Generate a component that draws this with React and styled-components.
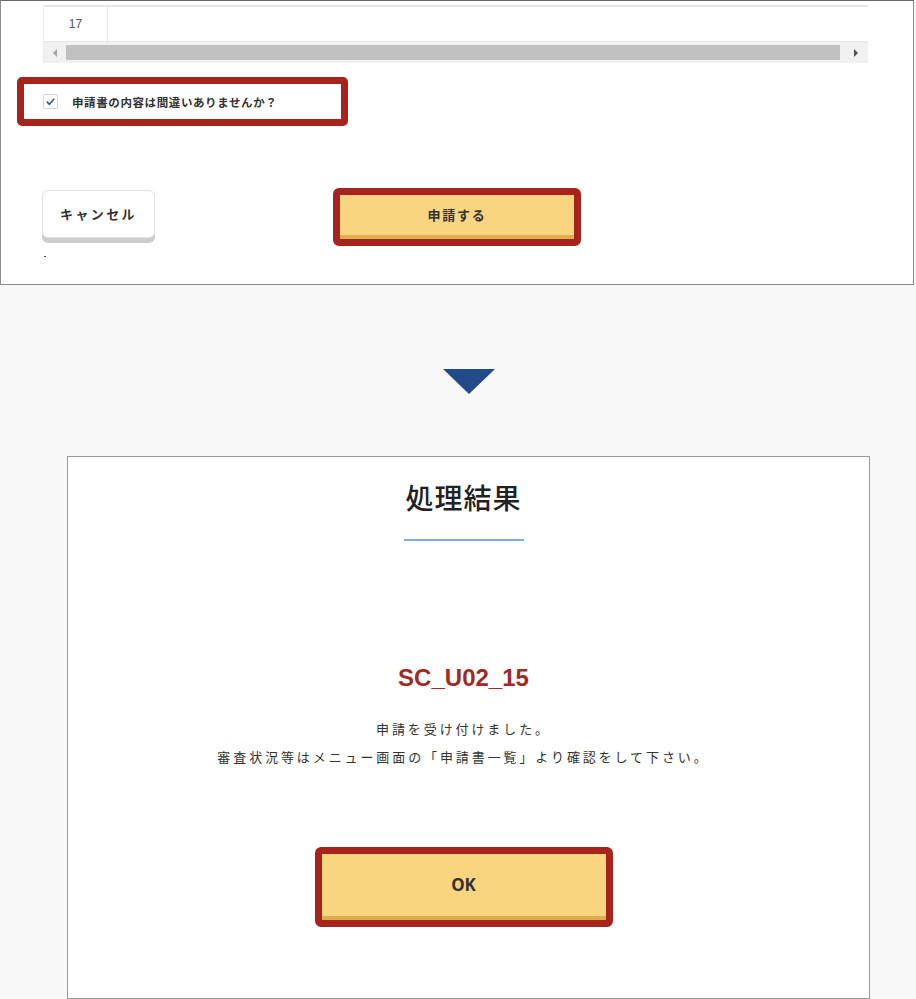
import styled, { createGlobalStyle } from 'styled-components';

const GlobalStyle = createGlobalStyle`
    html, body {
        margin: 0;
        padding: 0;
        background: #f8f8f8;
        font-family: "Noto Sans CJK JP", "Noto Sans", sans-serif;
    }
    * { box-sizing: border-box; }
`

const FormPanel = styled.section`
    width: 914px;
    height: 285px;
    background: #fff;
    border: 1px solid #8c8c8c;
    border-top-color: #666;
`

const Table = styled.div`
    margin: 4px 0 0 42px;
    width: 825px;
    border-top: 2px solid #e6e6e6;
    border-left: 1px solid #ececec;
`

const Row = styled.div`
    display: flex;
    height: 35px;
    border-bottom: 1px solid #e6e6e6;
`

const NumCell = styled.div`
    width: 64px;
    display: flex;
    align-items: center;
    justify-content: center;
    border-right: 1px solid #e6e6e6;
    font-family: "Liberation Sans", sans-serif;
    font-size: 12px;
    color: #555;
`

const Scrollbar = styled.div`
    display: flex;
    align-items: center;
    height: 21px;
    background: #f1f1f1;
    padding: 0 4px;
    gap: 4px;
`

const Thumb = styled.div`
    flex: 1;
    height: 15px;
    background: #c1c1c1;
`

const Arrow = styled.span`
    width: 0;
    height: 0;
    border-top: 4px solid transparent;
    border-bottom: 4px solid transparent;
    ${p => p.$dir === 'left'
        ? 'border-right: 4px solid #a3a3a3; margin: 0 5px;'
        : 'border-left: 4px solid #505050; margin: 0 6px 0 10px;'}
`

const ConfirmBox = styled.label`
    display: flex;
    align-items: center;
    gap: 14px;
    margin: 14px 0 0 16px;
    width: 331px;
    height: 49px;
    padding-left: 19px;
    border: 7px solid #a6241d;
    border-radius: 5px;
    font-size: 11.5px;
    font-weight: 700;
    letter-spacing: 0.6px;
    color: #333;
`

const Check = styled.span`
    width: 15px;
    height: 15px;
    border: 1px solid #d4d4d4;
    border-radius: 2px;
    display: flex;
    align-items: center;
    justify-content: center;
    svg { width: 11px; height: 11px; }
`

const ButtonRow = styled.div`
    display: flex;
    align-items: flex-start;
    margin: 62px 0 0 41px;
`

const CancelButton = styled.button`
    margin-top: 2px;
    width: 113px;
    height: 48px;
    padding: 0 0 2px;
    background: #fff;
    border: 1px solid #e4e4e4;
    border-radius: 6px;
    box-shadow: 0 5px 0 #cdcdcd;
    font-family: inherit;
    font-size: 13px;
    font-weight: 700;
    letter-spacing: 2.4px;
    color: #333;
`

const PrimaryButton = styled.button`
    width: ${p => p.$w}px;
    height: ${p => p.$h}px;
    margin-left: ${p => p.$ml || 0}px;
    margin-top: ${p => p.$mt || 0}px;
    border: 7px solid #a6241d;
    border-radius: 6px;
    background: #f8d57e;
    box-shadow: inset 0 -4px 0 #ddb04e;
    font-family: ${p => p.$latin ? '"Noto Sans", sans-serif' : 'inherit'};
    font-size: ${p => p.$fs}px;
    font-weight: 700;
    letter-spacing: ${p => p.$ls || 0}px;
    color: #333;
    padding: 0 0 6px;
`

const Dash = styled.div`
    margin: 10px 0 0 43px;
    width: 2px;
    height: 1px;
    background: #444;
`

const ArrowRow = styled.div`
    display: flex;
    justify-content: center;
    padding: 84px 0 0 21px;
`

const DownTriangle = styled.div`
    width: 0;
    height: 0;
    border-left: 26px solid transparent;
    border-right: 26px solid transparent;
    border-top: 25px solid #234a8b;
`

const ResultPanel = styled.section`
    margin: 62px 0 0 67px;
    width: 803px;
    height: 543px;
    background: #fff;
    border: 1px solid #9a9a9a;
    padding-right: 10px;
    display: flex;
    flex-direction: column;
    align-items: center;
`

const Title = styled.h2`
    margin: 20px 0 0;
    font-size: 28px;
    line-height: 40px;
    font-weight: 500;
    letter-spacing: 1px;
    color: #222;
`

const Underline = styled.div`
    margin-top: 22px;
    width: 120px;
    height: 2px;
    background: #79b1e6;
`

const Code = styled.div`
    margin-top: 122px;
    font-family: "Liberation Sans", sans-serif;
    font-size: 24px;
    line-height: 30px;
    font-weight: 700;
    color: #a22a26;
`

const Message = styled.p`
    margin: 22px 0 0;
    text-align: center;
    font-size: 13px;
    line-height: 28px;
    letter-spacing: 2.9px;
    color: #333;
`

const App = () => {
    return (
        <>
            <GlobalStyle />
            <FormPanel>
                <Table>
                    <Row>
                        <NumCell>17</NumCell>
                    </Row>
                    <Scrollbar>
                        <Arrow $dir="left" />
                        <Thumb />
                        <Arrow $dir="right" />
                    </Scrollbar>
                </Table>

                <ConfirmBox>
                    <Check>
                        <svg viewBox="0 0 12 12" fill="none">
                            <path d="M2 6.2 L4.8 9 L10 3" stroke="#2f5a9c" strokeWidth="1.8" />
                        </svg>
                    </Check>
                    申請書の内容は間違いありませんか？
                </ConfirmBox>

                <ButtonRow>
                    <CancelButton>キャンセル</CancelButton>
                    <PrimaryButton $w={248} $h={58} $ml={178} $fs={13} $ls={1.8}>申請する</PrimaryButton>
                </ButtonRow>
                <Dash />
            </FormPanel>

            <ArrowRow>
                <DownTriangle />
            </ArrowRow>

            <ResultPanel>
                <Title>処理結果</Title>
                <Underline />
                <Code>SC_U02_15</Code>
                <Message>
                    申請を受け付けました。<br />
                    審査状況等はメニュー画面の「申請書一覧」より確認をして下さい。
                </Message>
                <PrimaryButton $mt={76} $w={298} $h={80} $fs={17} $latin>OK</PrimaryButton>
            </ResultPanel>
        </>
    )
}

export default App
